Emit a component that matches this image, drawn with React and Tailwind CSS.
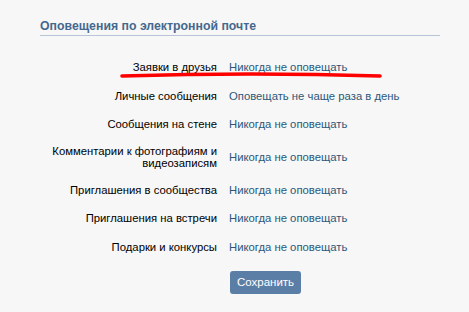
const rows = [
  { label: "Заявки в друзья", value: "Никогда не оповещать" },
  { label: "Личные сообщения", value: "Оповещать не чаще раза в день" },
  { label: "Сообщения на стене", value: "Никогда не оповещать" },
  { label: ["Комментарии к фотографиям и", "видеозаписям"], value: "Никогда не оповещать", tall: true },
  { label: "Приглашения в сообщества", value: "Никогда не оповещать" },
  { label: "Приглашения на встречи", value: "Никогда не оповещать" },
  { label: "Подарки и конкурсы", value: "Никогда не оповещать" },
];

const App = () => {
  return (
    <div className="relative w-[469px] h-[312px] bg-[#f7f7f7] font-['Liberation_Sans',Arial,sans-serif] text-[11.3px] text-black overflow-hidden">
      <div className="pl-[40px] w-[440px] pt-[18px]">
        <h2 className="font-bold text-[12.3px] leading-[16px] text-[#45688e] pb-[1px] border-b border-[#b9c4d8]">
          Оповещения по электронной почте
        </h2>

        <div className="mt-[17px] flex flex-col">
          {rows.map((row, i) => (
            <div
              key={i}
              className={`flex items-center ${row.tall ? "py-[6.5px]" : "h-[28.5px]"}`}
            >
              <div className="w-[177px] text-right leading-[12px] whitespace-nowrap">
                {Array.isArray(row.label)
                  ? row.label.map((l, j) => <div key={j}>{l}</div>)
                  : row.label}
              </div>
              <div className="pl-[12px] text-[#2b587a] leading-[12px]">{row.value}</div>
            </div>
          ))}
        </div>

        <div className="pl-[190px] mt-[10px]">
          <button className="bg-[#5b7ea7] text-white rounded-[3px] w-[71px] h-[23px] text-[11.5px] leading-[23px]">
            Сохранить
          </button>
        </div>
      </div>

      <svg className="absolute left-[118px] top-[70px]" width="268" height="10" viewBox="0 0 268 10">
        <path d="M4 6 Q 134 2 262 6" stroke="#ff0000" strokeWidth="3.6" strokeLinecap="round" fill="none" />
      </svg>
    </div>
  );
};

export default App;
